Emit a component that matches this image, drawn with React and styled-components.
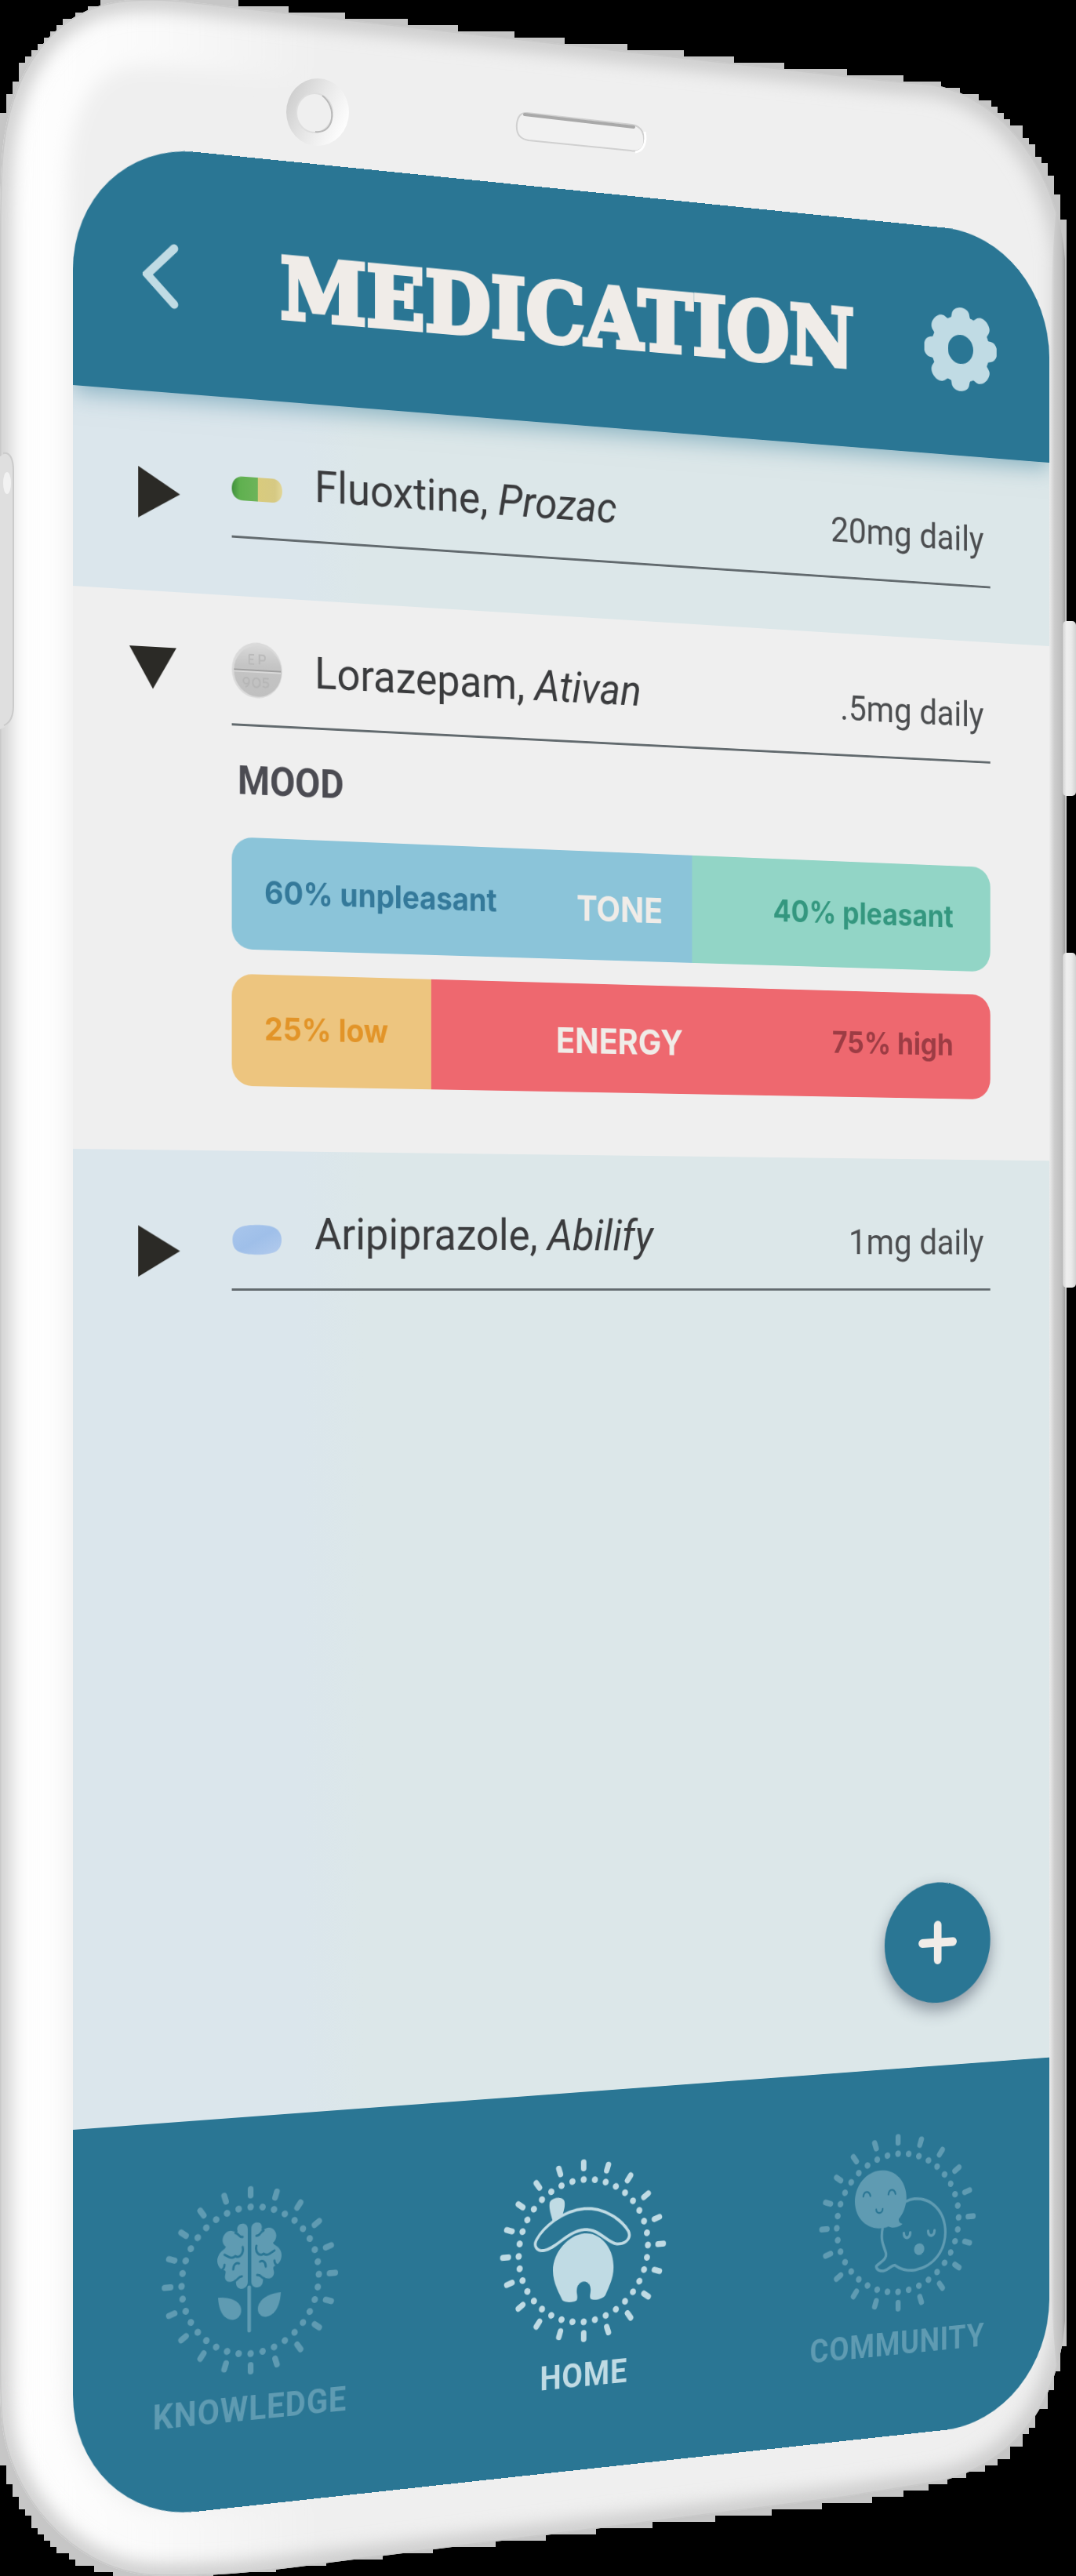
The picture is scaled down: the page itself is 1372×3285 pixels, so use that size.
import React from "react";
import styled, { createGlobalStyle, css } from "styled-components";

const color = {
  teal: "#2a7694",
  sky: "#c0dbe4",
  muted: "#5f9bb2",
  cream: "#f0ece8",
  paper: "#efefef",
  mist: "#dce7e9",
  mistBlue: "#dbe6ec",
  ink: "#2b2a26",
  text: "#3a3b3d",
};

const GlobalStyle = createGlobalStyle`
  *, *::before, *::after { box-sizing: border-box; }
  body {
    margin: 0;
    background: #000;
    font-family: Roboto, "Liberation Sans", sans-serif;
    color: ${color.text};
    overflow-x: clip;
  }
  h1, h2, h3, p { margin: 0; }
`;

/* ---------- scene ---------- */

const Stage = styled.div`
  position: relative;
  display: grid;
  min-height: 100vh;
  padding: 178px 34px 65px 93px;
  overflow: hidden;
  perspective: 4703px;
  perspective-origin: 93px 50%;
`;

const BodyArt = styled.svg`
  position: absolute;
  inset: 0;
  width: 100%;
  height: 100%;
`;

const Screen = styled.div`
  display: flex;
  flex-direction: column;
  width: 115%;
  border-radius: 166px;
  overflow: hidden;
  background: linear-gradient(to right, ${color.mistBlue} 22%, ${color.mist} 28%);
  transform: rotateY(18deg);
  transform-origin: left center;
`;

/* ---------- header ---------- */

const Header = styled.header`
  position: relative;
  z-index: 1;
  display: flex;
  align-items: center;
  justify-content: space-between;
  height: 313px;
  padding: 18px 84px 0 94px;
  background: ${color.teal};
  box-shadow: 0 6px 30px rgba(42, 118, 148, 0.5);
`;

const Title = styled.h1`
  font-family: "DejaVu Serif", "Liberation Serif", serif;
  font-size: 109px;
  line-height: 120px;
  font-weight: 700;
  color: ${color.cream};
  -webkit-text-stroke: 6px ${color.cream};
  stroke-linejoin: round;
`;

const IconButton = styled.button`
  display: flex;
  padding: 0;
  border: 0;
  background: none;
  color: ${(p) => p.$tone || color.sky};
  cursor: pointer;
`;

/* ---------- drug list ---------- */

const List = styled.main`
  display: flex;
  flex-direction: column;
  flex: 1;
`;

const Section = styled.section`
  display: flex;
  gap: 60px;
  padding: ${(p) => (p.$open ? "55px 94px 84px 76px" : "70px 94px 75px 88px")};
  ${(p) =>
    p.$open
      ? css`
          gap: 72px;
          background: ${color.paper};
        `
      : ""}
`;

const Details = styled.div`
  flex: 1;
  min-width: 0;
`;

const Entry = styled.div`
  display: flex;
  align-items: flex-end;
  gap: 45px;
  padding-bottom: 34px;
  border-bottom: 3px solid #626a6e;
`;

const Name = styled.h2`
  flex: 1;
  font-size: 58px;
  line-height: 74px;
  font-weight: 400;
`;

const Dose = styled.p`
  font-size: 49px;
  line-height: 58px;
  padding-right: 10px;
  color: #4b4d4f;
`;

const MoodTitle = styled.h3`
  margin: 41px 0 43px 8px;
  font-size: 51px;
  line-height: 60px;
  font-weight: 700;
  color: #4b4b52;
`;

const Meters = styled.div`
  display: grid;
  gap: 32px;
`;

const Meter = styled.div`
  display: grid;
  grid-template-columns: 1fr auto 1fr;
  height: 145px;
  padding: 0 58px 0 45px;
  border-radius: 28px;
  background: linear-gradient(
    to right,
    ${(p) => p.$left} ${(p) => p.$split}%,
    ${(p) => p.$right} ${(p) => p.$split}%
  );
  font-family: Inter, "Liberation Sans", sans-serif;
  font-weight: 700;
`;

const MeterSide = styled.span`
  padding-top: 46px;
  font-size: 41px;
  line-height: 48px;
  text-align: ${(p) => (p.$end ? "right" : "left")};
  color: ${(p) => p.$ink};
`;

const MeterTitle = styled.span`
  padding-top: 50px;
  font-size: 46px;
  line-height: 52px;
  color: ${color.cream};
`;

const AddButton = styled.button`
  display: grid;
  place-items: center;
  width: 166px;
  height: 166px;
  margin: auto 94px 87px auto;
  padding: 0;
  border: 0;
  border-radius: 50%;
  background: ${color.teal};
  color: ${color.cream};
  box-shadow: 0 10px 22px rgba(40, 50, 70, 0.45);
  cursor: pointer;
`;

/* ---------- tab bar ---------- */

const TabBar = styled.nav`
  display: flex;
  justify-content: space-between;
  height: 504px;
  padding: 90px 104px 0 107px;
  background: ${color.teal};
`;

const Tab = styled.a`
  display: flex;
  flex-direction: column;
  align-items: center;
  gap: 18px;
  width: 270px;
  font-size: 44px;
  line-height: 52px;
  font-weight: 700;
  letter-spacing: 1px;
  text-decoration: none;
  color: ${(p) => (p.$active ? color.sky : color.muted)};
`;

/* ---------- drawings ---------- */

const STAIRS =
  "M128 0H304V8H368V16H440V24H520V32H584V40H656V48H720V56H800V64H872V72H936V80H1000V88H1080V96H1152V104H1200V112H1224V120H1248V128H1264V136H1272V144H1280V152H1288V160H1304V176H1312V184H1320V200H1328V208H1336V224H1344V248H1352V280H1360V2992H1352V3024H1344V3048H1336V3072H1320V3096H1312V3104H1304V3120H1288V3136H1272V3144H1256V3152H1232V3160H1208V3168H1184V3176H1152V3184H1112V3192H1048V3200H984V3208H912V3216H832V3224H760V3232H696V3240H632V3248H552V3256H488V3264H416V3272H352V3280H272V3285H144V3280H120V3272H96V3264H88V3256H72V3248H64V3240H56V3232H48V3224H40V3208H32V3200H24V3184H16V3168H8V3144H0V144H8V120H16V104H24V80H32V72H40V64H48V56H56V48H64V40H72V32H80V24H96V16H112V8H128Z";

const BODY =
  "M2 210C8 90 70 4 170 0C220 -3 250 4 300 9L1080 97C1130 103 1170 106 1190 108C1280 124 1350 220 1358 330V2960C1350 3060 1300 3140 1200 3164C1170 3170 1120 3177 1080 3184L420 3268C340 3279 270 3287 190 3284C90 3276 10 3180 2 3085C-1 3050 0 3000 0 2980V300C0 260 1 230 2 210Z";

function PhoneBody() {
  return (
    <BodyArt viewBox="0 0 1372 3285" preserveAspectRatio="none" aria-hidden="true">
      <defs>
        <clipPath id="body-clip">
          <path d={BODY} />
        </clipPath>
        <filter id="soft" x="-10%" y="-10%" width="120%" height="120%">
          <feGaussianBlur stdDeviation="12" />
        </filter>
        <linearGradient id="glow" x1="0" x2="1" y1="0" y2="0">
          <stop offset="0" stopColor="#fff" />
          <stop offset="0.14" stopColor="#fff" stopOpacity="0.7" />
          <stop offset="0.3" stopColor="#fff" stopOpacity="0" />
        </linearGradient>
        <linearGradient id="edge" x1="0" x2="1" y1="0" y2="0">
          <stop offset="0" stopColor="#ececec" />
          <stop offset="0.3" stopColor="#cdcdcd" />
          <stop offset="0.75" stopColor="#bdbdbd" />
          <stop offset="1" stopColor="#979797" />
        </linearGradient>
        <linearGradient id="lens" x1="0" x2="1" y1="0.2" y2="0.7">
          <stop offset="0" stopColor="#cbcbcb" />
          <stop offset="0.5" stopColor="#e8e8e8" />
          <stop offset="1" stopColor="#fff" />
        </linearGradient>
        <linearGradient id="side" x1="0" x2="1" y1="0" y2="0">
          <stop offset="0" stopColor="#d2d2d2" />
          <stop offset="0.3" stopColor="#efefef" />
          <stop offset="0.65" stopColor="#eaeaea" />
          <stop offset="1" stopColor="#d2d2d2" />
        </linearGradient>
      </defs>
      <path d={STAIRS} fill="#c6c6c6" />
      <g clipPath="url(#body-clip)">
        <path d={BODY} fill="#efefef" />
        <path d={BODY} fill="none" stroke="url(#glow)" strokeWidth="170" filter="url(#soft)" />
        <path d={BODY} fill="none" stroke="#c4c4c4" strokeWidth="24" filter="url(#soft)" />
        <path d={BODY} fill="none" stroke="#c9c9c9" strokeWidth="3" />
        <path
          d="M1350 230C1343 300 1339 370 1338 460V2860C1339 2920 1343 2980 1350 3050H1359V230Z"
          fill="url(#edge)"
        />
      </g>
      <rect x="1355" y="792" width="17" height="223" rx="5" fill="url(#side)" />
      <rect x="1355" y="1215" width="17" height="427" rx="5" fill="url(#side)" />
      <path d="M0 582C10 574 17 582 17 600V900C17 916 12 926 0 930Z" fill="#dfdfdf" />
      <path d="M4 578C13 576 17 586 17 600V900C17 914 12 922 5 925" fill="none" stroke="#cbcbcb" strokeWidth="2" />
      <ellipse cx="9" cy="616" rx="5" ry="14" fill="#f2f2f2" />
      <ellipse cx="405" cy="143" rx="40" ry="43" fill="url(#lens)" />
      <ellipse cx="401" cy="144" rx="23" ry="25" fill="#efefef" stroke="#dedede" strokeWidth="2" />
      <path d="M411 122C430 136 427 171 402 168" fill="none" stroke="#b9b9b9" strokeWidth="2" />
      <path
        d="M672 144L806 159C819 161 822 172 821 182C820 190 814 194 804 192L674 179C661 177 658 168 659 158C660 149 664 143 672 144Z"
        fill="#f1f1f1"
        stroke="#d0d0d0"
        strokeWidth="2"
      />
      <path d="M669 146L808 162" stroke="#a9a9a9" strokeWidth="4" strokeLinecap="round" />
      <path d="M822 168C825 182 820 193 810 194" fill="none" stroke="#fff" strokeWidth="3" />
    </BodyArt>
  );
}

function Chevron() {
  return (
    <svg width="80" height="90" viewBox="0 0 80 90" fill="none" aria-hidden="true">
      <path d="M43 6L6 42L43 78" stroke="currentColor" strokeWidth="11" strokeLinecap="round" strokeLinejoin="miter" />
    </svg>
  );
}

function Gear() {
  const teeth = Array.from({ length: 8 }, (_, i) => i * 45);
  return (
    <svg width="114" height="116" viewBox="-57 -58 114 116" aria-hidden="true">
      <circle r="33" fill="none" stroke="currentColor" strokeWidth="26" />
      {teeth.map((a) => (
        <path
          key={a}
          d="M-20 -38C-13 -42 -15 -47 -13 -51C-9 -60 9 -60 13 -51C15 -47 13 -42 20 -38Z"
          fill="currentColor"
          transform={`rotate(${a})`}
        />
      ))}
    </svg>
  );
}

function Caret({ open }) {
  return (
    <svg width="68" height="96" viewBox="0 0 68 96" aria-hidden="true">
      <path d={open ? "M0 17H64L32 71Z" : "M0 27L57 60L0 93Z"} fill="currentColor" />
    </svg>
  );
}

function Capsule() {
  return (
    <svg width="70" height="74" viewBox="0 0 70 74" role="img" aria-label="Green and yellow capsule">
      <defs>
        <linearGradient id="cap-green" x1="0" x2="1">
          <stop offset="0" stopColor="#3f8f3c" />
          <stop offset="0.3" stopColor="#5fb04f" />
          <stop offset="1" stopColor="#6db45a" />
        </linearGradient>
        <linearGradient id="cap-yellow" x1="0" x2="1">
          <stop offset="0" stopColor="#d9cb7d" />
          <stop offset="0.7" stopColor="#d6c983" />
          <stop offset="1" stopColor="#e2d79a" />
        </linearGradient>
      </defs>
      <path d="M36 31H16C5 31 0 38 0 47C0 55 5 62 16 62H36Z" fill="url(#cap-green)" />
      <path d="M36 31H56C65 31 70 38 70 47C70 55 65 62 56 62H36Z" fill="url(#cap-yellow)" />
    </svg>
  );
}

function RoundTablet() {
  return (
    <svg width="70" height="76" viewBox="0 0 70 76" role="img" aria-label="Grey scored tablet">
      <defs>
        <linearGradient id="tab-grey" x1="0" x2="0" y1="0" y2="1">
          <stop offset="0" stopColor="#d8d8d8" />
          <stop offset="0.4" stopColor="#c4c4c4" />
          <stop offset="1" stopColor="#c0c0c0" />
        </linearGradient>
      </defs>
      <ellipse cx="35" cy="40" rx="35" ry="36" fill="#dadada" />
      <ellipse cx="36" cy="41" rx="33" ry="33" fill="url(#tab-grey)" />
      <path d="M3 40H68" stroke="#a0a0a0" strokeWidth="2" />
      <path d="M3 42H68" stroke="#d9d9d9" strokeWidth="2" />
      <path d="M24 20V32M24 20H31M24 26H30M24 32H31M38 32V20H43C47 20 47 27 43 27H38" fill="none" stroke="#bababa" strokeWidth="2" />
      <circle cx="20" cy="54" r="4" fill="none" stroke="#b6b6b6" strokeWidth="2" />
      <path d="M24 54C24 59 22 61 19 62M51 50H44V55C50 54 52 57 50 60C48 62 45 62 43 60" fill="none" stroke="#b6b6b6" strokeWidth="2" />
      <ellipse cx="34" cy="56" rx="5" ry="6" fill="none" stroke="#b6b6b6" strokeWidth="2" />
    </svg>
  );
}

function BlueTablet() {
  return (
    <svg width="70" height="74" viewBox="0 0 70 74" role="img" aria-label="Blue tablet">
      <defs>
        <linearGradient id="tab-blue" x1="0" x2="1" y1="0" y2="1">
          <stop offset="0" stopColor="#a9c6ec" />
          <stop offset="0.5" stopColor="#9fbfe9" />
          <stop offset="1" stopColor="#b3cbed" />
        </linearGradient>
      </defs>
      <path
        d="M14 28C24 25 46 25 56 28C65 31 69 37 69 45C69 53 65 60 56 62C46 65 24 65 14 62C5 60 1 54 1 45C1 37 5 31 14 28Z"
        fill="url(#tab-blue)"
      />
    </svg>
  );
}

function Plus() {
  return (
    <svg width="64" height="64" viewBox="0 0 64 64" aria-hidden="true">
      <path d="M32 8V56M8 32H56" stroke="currentColor" strokeWidth="12" strokeLinecap="round" />
    </svg>
  );
}

function Sunburst({ children }) {
  const rays = Array.from({ length: 20 }, (_, i) => i * 18);
  const dots = Array.from({ length: 36 }, (_, i) => i * 10);
  return (
    <svg width="244" height="244" viewBox="0 0 244 244" fill="currentColor" aria-hidden="true">
      <g transform="translate(122 122)">
        {rays.map((a) => (
          <path key={a} d="M0 -118V-110" transform={`rotate(${a})`} stroke="currentColor" strokeWidth="8" strokeLinecap="round" />
        ))}
        {dots.map((a) => (
          <circle key={a} cy="-95" r="4.5" transform={`rotate(${a})`} />
        ))}
      </g>
      {children}
    </svg>
  );
}

function BrainHalf() {
  return (
    <g>
      <path d="M118 55V124C118 134 103 135 102 125C101 120 103 118 98 121C90 124 85 118 87 112C88 108 88 106 84 106C76 102 74 92 78 86C81 80 86 80 88 76C78 68 86 54 96 56C101 57 103 60 104 57C100 46 118 44 118 55Z" />
      <path
        d="M101 59C106 60 106 66 111 65M111 78C113 86 107 93 101 89M86 86C91 89 96 93 101 89M98 106C98 99 103 97 106 99M101 121C105 119 106 115 110 116M80 106C86 105 86 101 86 99"
        fill="none"
        stroke={color.teal}
        strokeWidth="3"
        strokeLinecap="round"
      />
      <path d="M77 141C94 141 109 148 109 160C109 168 102 172 96 171C84 169 78 157 77 141Z" />
    </g>
  );
}

function KnowledgeIcon() {
  return (
    <Sunburst>
      <BrainHalf />
      <g transform="translate(241 0) scale(-1 1)">
        <BrainHalf />
      </g>
      <path d="M120 131V187" stroke="currentColor" strokeWidth="5" strokeLinecap="round" />
    </Sunburst>
  );
}

function HomeIcon() {
  return (
    <Sunburst>
      <path d="M123 99C100 99 77 120 77 145C77 160 84 172 90 184C92 190 110 190 112 187C114 182 111 178 112 173C113 160 131 160 132 173C133 178 130 184 132 187C135 190 150 190 154 184C160 172 167 160 166 145C165 120 146 99 123 99Z" />
      <path d="M77 80C74 70 71 62 72 55C73 47 93 46 94 55C95 62 92 68 91 73Z" />
      <path
        d="M64 117C54 118 48 110 53 102C62 87 90 66 123 66C155 66 180 88 188 101C193 111 184 118 172 117C158 116 145 94 123 94C98 94 82 116 64 117Z"
        fill="none"
        stroke="currentColor"
        strokeWidth="4"
      />
    </Sunburst>
  );
}

function CommunityIcon() {
  return (
    <Sunburst>
      <path
        d="M98 127C94 145 100 152 103 162C105 171 94 174 88 179C88 184 94 187 101 186C108 185 112 179 117 180C128 188 140 190 150 189C178 186 196 166 196 141C196 112 174 91 147 91C142 91 138 92 133 94"
        fill="none"
        stroke="currentColor"
        strokeWidth="4"
        strokeLinejoin="round"
      />
      <path d="M95 48C118 48 135 66 135 88C135 100 130 110 123 117C123 121 125 123 129 124C124 129 112 129 107 126C83 133 55 116 55 88C55 66 72 48 95 48Z" />
      <path
        d="M68 82C69 74 77 74 79 82M107 82C108 74 116 74 118 82M88 101C88 108 98 108 98 101"
        fill="none"
        stroke={color.teal}
        strokeWidth="2.5"
        strokeLinecap="round"
      />
      <path
        d="M131 137C131 146 141 146 141 137M169 137C169 146 179 146 179 137"
        fill="none"
        stroke="currentColor"
        strokeWidth="4"
        strokeLinecap="round"
      />
      <circle cx="155" cy="161" r="8" />
    </Sunburst>
  );
}

/* ---------- screen parts ---------- */

function Drug({ generic, brand, dose, pill, open, children }) {
  return (
    <Section $open={open}>
      <div>
        <IconButton $tone={color.ink} type="button" aria-expanded={Boolean(open)} aria-label={`Details for ${generic}`}>
          <Caret open={open} />
        </IconButton>
      </div>
      <Details>
        <Entry>
          {pill}
          <Name>
            {generic}, <em>{brand}</em>
          </Name>
          <Dose>{dose}</Dose>
        </Entry>
        {children}
      </Details>
    </Section>
  );
}

function MoodMeter({ title, split, left, right }) {
  return (
    <Meter $left={left.fill} $right={right.fill} $split={split}>
      <MeterSide $ink={left.ink}>{left.label}</MeterSide>
      <MeterTitle>{title}</MeterTitle>
      <MeterSide $ink={right.ink} $end>
        {right.label}
      </MeterSide>
    </Meter>
  );
}

export default function App() {
  return (
    <>
      <GlobalStyle />
      <Stage>
        <PhoneBody />
        <Screen>
          <Header>
            <IconButton type="button" aria-label="Back">
              <Chevron />
            </IconButton>
            <Title>MEDICATION</Title>
            <IconButton type="button" aria-label="Settings">
              <Gear />
            </IconButton>
          </Header>
          <List>
            <Drug generic="Fluoxtine" brand="Prozac" dose="20mg daily" pill={<Capsule />} />
            <Drug generic="Lorazepam" brand="Ativan" dose=".5mg daily" pill={<RoundTablet />} open>
              <MoodTitle>MOOD</MoodTitle>
              <Meters>
                <MoodMeter
                  title="TONE"
                  split={59}
                  left={{ label: "60% unpleasant", fill: "#8bc4d9", ink: "#34799a" }}
                  right={{ label: "40% pleasant", fill: "#92d5c6", ink: "#34977f" }}
                />
                <MoodMeter
                  title="ENERGY"
                  split={25}
                  left={{ label: "25% low", fill: "#edc57f", ink: "#e29428" }}
                  right={{ label: "75% high", fill: "#ee686f", ink: "#9c3c44" }}
                />
              </Meters>
            </Drug>
            <Drug generic="Aripiprazole" brand="Abilify" dose="1mg daily" pill={<BlueTablet />} />
            <AddButton type="button" aria-label="Add medication">
              <Plus />
            </AddButton>
          </List>
          <TabBar>
            <Tab href="#knowledge">
              <KnowledgeIcon />
              KNOWLEDGE
            </Tab>
            <Tab href="#home" $active aria-current="page">
              <HomeIcon />
              HOME
            </Tab>
            <Tab href="#community">
              <CommunityIcon />
              COMMUNITY
            </Tab>
          </TabBar>
        </Screen>
      </Stage>
    </>
  );
}
